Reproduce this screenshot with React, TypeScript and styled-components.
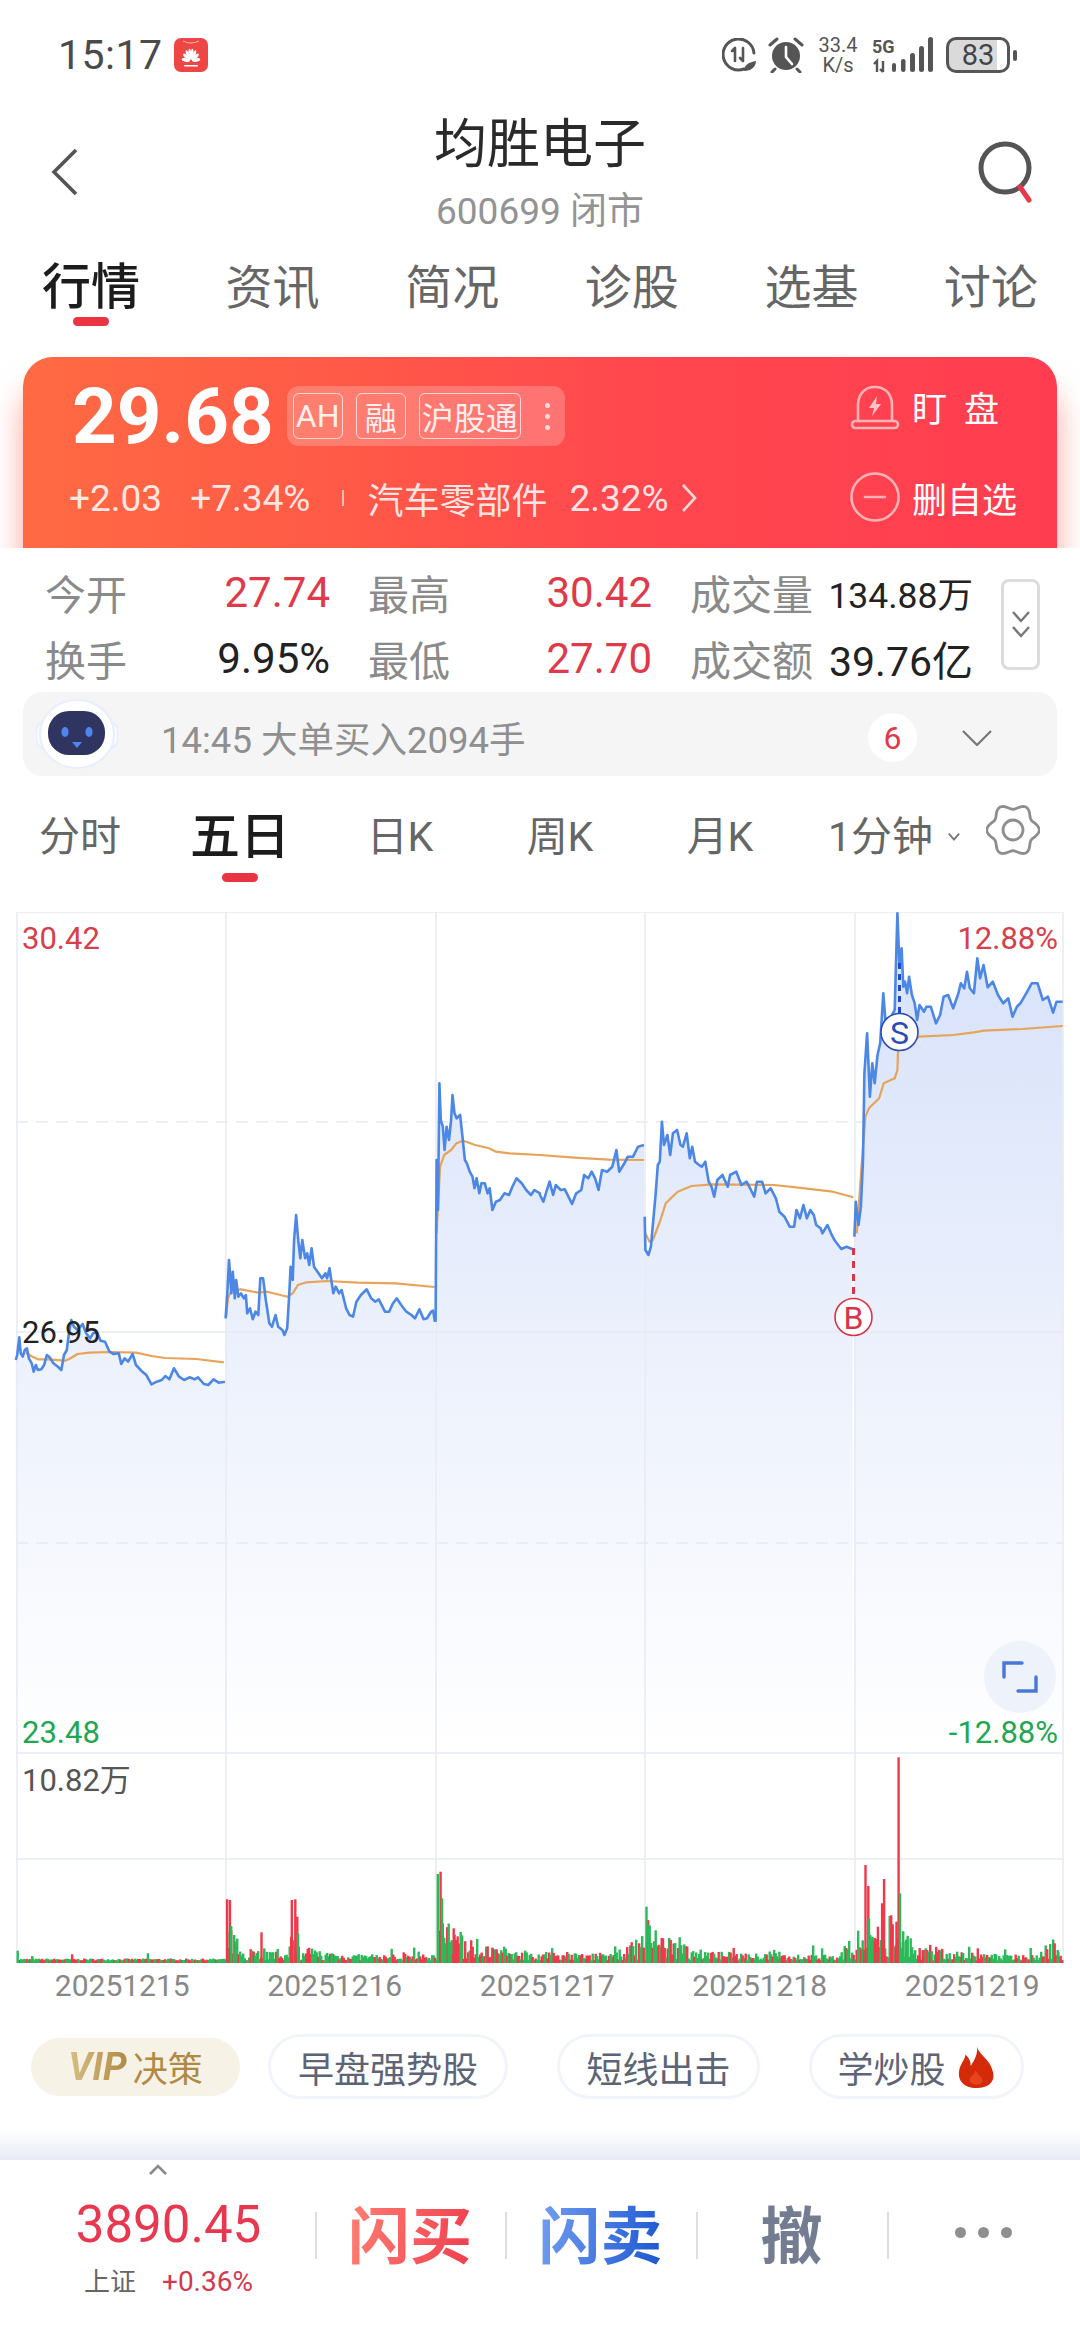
import React from 'react'
import styled, { createGlobalStyle } from 'styled-components'

// zoomed crop coordinates -> page coordinates
const leftCrop = (pts: number[]) => toPairs(pts, 0)
const rightCrop = (pts: number[]) => toPairs(pts, 540)
const toPairs = (pts: number[], dx: number) => {
    const out: number[][] = []
    for (let i = 0; i < pts.length; i += 2) {
        out.push([dx + pts[i] / 2.904, 900 + pts[i + 1] / 3])
    }
    return out
}

const priceDays: number[][][] = [
    leftCrop([46,1380,50,1365,56,1312,60,1360,66,1370,72,1350,78,1345,84,1375,92,1390,98,1415,104,1395,110,1410,120,1408,128,1395,136,1365,144,1372,155,1390,168,1400,178,1410,186,1365,194,1350,200,1300,207,1260,215,1280,225,1290,240,1272,250,1300,262,1315,270,1300,282,1298,292,1322,305,1325,318,1355,330,1362,345,1360,352,1392,362,1375,372,1385,385,1362,395,1395,410,1412,425,1425,440,1453,455,1445,470,1440,480,1428,492,1438,505,1405,520,1430,535,1440,550,1432,565,1438,575,1432,592,1452,605,1455,620,1438,635,1448,653,1445]),
    leftCrop([655,1255,660,1180,665,1080,672,1180,676,1115,682,1195,686,1140,692,1190,700,1180,708,1195,714,1185,718,1240,726,1225,734,1258,742,1235,750,1245,756,1135,764,1135,772,1200,782,1270,790,1280,800,1245,808,1280,820,1290,826,1305,834,1285,840,1180,844,1100,850,1140,854,1020,860,945,866,1020,872,1075,878,1020,886,1075,892,1060,898,1095,905,1045,912,1100,925,1120,935,1135,945,1120,950,1135,957,1105,968,1180,975,1160,985,1180,992,1170,1005,1225,1015,1245,1025,1250,1035,1205,1048,1185,1065,1168,1078,1195,1090,1205,1100,1198,1118,1235,1130,1235,1140,1212,1152,1195,1165,1215,1180,1235,1195,1245,1205,1255,1218,1228,1230,1258,1240,1255,1252,1235,1258,1232,1263,1265]),
    [
        ...leftCrop([1265,1265,1268,780,1272,930,1276,550,1280,660,1286,680,1291,750,1297,680,1304,720,1310,660,1314,585,1320,640,1326,655,1336,645,1342,700,1350,780,1356,790,1364,815,1372,830,1378,865,1384,835,1392,880,1398,850,1408,850,1416,880,1422,865,1430,930,1440,905,1452,900,1465,880,1478,885,1488,860,1500,835,1515,850,1528,870,1542,885,1552,870,1568,880]),
        ...rightCrop([0,885,10,905,20,870,28,845,38,885,46,855,60,870,72,868,85,895,93,912,105,880,120,870,128,825,140,835,150,815,160,835,170,870,180,810,195,815,210,800,222,750,230,815,245,790,255,770,270,770,285,740,302,735]),
    ],
    rightCrop([304,950,306,1050,315,1065,322,1040,330,950,336,880,342,795,348,785,354,665,360,735,370,705,378,765,386,700,398,690,408,735,415,740,426,700,435,775,442,740,450,785,462,795,470,800,480,785,490,845,498,860,506,890,515,840,530,825,545,860,552,825,570,815,585,855,600,845,610,865,622,890,630,845,645,845,655,880,670,865,685,895,695,935,710,950,725,980,738,980,745,930,755,955,765,915,775,955,785,930,795,945,802,975,815,985,820,1000,835,975,845,1000,855,1020,875,1047,890,1040,908,1048]),
    rightCrop([913,1010,917,905,925,975,932,920,938,780,942,520,950,400,958,590,965,490,972,550,980,465,988,430,997,280,1003,360,1020,350,1030,330,1038,40,1044,200,1050,145,1055,260,1060,245,1066,280,1072,230,1080,285,1088,310,1095,360,1102,315,1115,335,1122,320,1135,320,1150,370,1162,345,1172,290,1185,285,1200,325,1215,280,1222,250,1232,265,1240,215,1248,265,1260,280,1270,175,1278,235,1288,195,1300,262,1315,245,1330,285,1345,310,1360,295,1372,350,1385,320,1395,310,1412,280,1428,250,1445,250,1460,300,1475,290,1490,338,1500,305,1518,305]),
]

const averageDays: number[][][] = [
    leftCrop([75,1358,90,1368,110,1378,140,1378,190,1382,205,1375,225,1362,260,1358,320,1356,395,1358,440,1368,480,1374,570,1377,650,1387]),
    leftCrop([657,1250,662,1195,672,1170,700,1168,750,1178,775,1175,835,1190,850,1180,865,1155,890,1147,950,1143,1040,1148,1150,1150,1262,1161]),
    [
        ...leftCrop([1268,1000,1278,800,1290,765,1310,750,1325,730,1345,722,1380,735,1420,745,1440,755,1480,760,1568,765]),
        ...rightCrop([100,773,200,779,302,780]),
    ],
    rightCrop([306,1000,318,1025,328,1020,350,960,365,910,400,875,440,858,500,853,680,855,750,863,850,875,910,892]),
    rightCrop([920,1000,935,780,945,650,955,625,985,595,998,550,1030,535,1038,510,1040,450,1100,410,1200,405,1260,397,1290,392,1400,387,1518,378]),
]

const line = (pts: number[][]) => pts.map((p) => `${p[0].toFixed(1)},${p[1].toFixed(1)}`).join(' ')
const area = (pts: number[][]) => `${pts[0][0].toFixed(1)},1752 ${line(pts)} ${pts[pts.length - 1][0].toFixed(1)},1752`

// volume bars: quiet noise plus the spikes read off the picture
const RED = '#f0384a'
const GREEN = '#2cb95a'
const buildBars = () => {
    let seed = 7
    const rnd = () => {
        seed = (seed * 16807) % 2147483647
        return seed / 2147483647
    }
    const bursts = [[226, 30, 22], [290, 22, 18], [436, 42, 42], [645, 42, 30], [855, 32, 32], [888, 32, 26]]
    const bars: { x: number; h: number; c: string }[] = []
    for (let x = 17; x < 1062; x += 1.5) {
        let env = x < 226 ? 2 : 6
        bursts.forEach(([start, amp, decay]) => {
            if (x >= start) env += amp * Math.exp(-(x - start) / decay)
        })
        if (x > 610 && x < 645) env += (x - 610) * 0.6
        if (x > 825 && x < 855) env += (x - 825) * 0.6
        if (x > 1035) env += (x - 1035) * 0.9
        let h = 2.5 + rnd() * env
        if (x > 226 && rnd() > 0.93) h += 7 * rnd() + 3
        bars.push({ x, h, c: rnd() > 0.45 ? GREEN : RED })
    }
    const spikes: [number, number, string][] = [
        [24,752,GREEN],[45,768,GREEN],[103,763,RED],[213,760,GREEN],[328,598,RED],[332,600,RED],[334,678,GREEN],[340,725,GREEN],[378,697,RED],[382,745,GREEN],
        [422,600,RED],[427,598,RED],[430,650,RED],[431,700,GREEN],[480,760,GREEN],[634,522,GREEN],[638,515,RED],[640,595,GREEN],[645,730,GREEN],[657,685,RED],[660,720,RED],[714,745,RED],
        [937,620,GREEN],[940,675,GREEN],[948,725,GREEN],[961,715,RED],[1130,755,GREEN],[1192,745,GREEN],[1255,495,RED],[1259,558,RED],[1260,655,GREEN],[1265,710,GREEN],
        [1273,680,RED],[1277,720,GREEN],[1279,610,RED],[1282,537,RED],[1300,665,RED],[1303,172,RED],[1305,580,GREEN],[1310,725,GREEN],[1418,745,RED],[1535,755,GREEN],
    ]
    spikes.forEach(([zx, zy, c]) => {
        bars.push({ x: zx / 1.452, h: 1963 - (1700 + zy / 3), c })
    })
    return bars
}
const volumeBars = buildBars()

const gearPath = (() => {
    const pts: string[] = []
    for (let a = 0; a < 360; a += 5) {
        const t = (a * Math.PI) / 180
        const r = 23.5 + 2.8 * Math.cos(6 * t)
        pts.push(`${(27 + r * Math.cos(t)).toFixed(1)},${(27 + r * Math.sin(t)).toFixed(1)}`)
    }
    return pts.join(' ')
})()

const GlobalStyle = createGlobalStyle`
    html, body {
        margin: 0;
        padding: 0;
        background: #fff;
    }
    body {
        font-family: Roboto, "Noto Sans CJK SC", sans-serif;
        color: #222;
    }
`

const App: React.FC = () => {
    return (
        <Page>
            <GlobalStyle />
            <StatusBar>
                <StatusLeft>
                    <Clock>15:17</Clock>
                    <svg width="34" height="34" viewBox="0 0 34 34">
                        <rect width="34" height="34" rx="7" fill="#ee4545" />
                        <path d="M9 3 Q17 7 25 3" stroke="#ffb3ad" strokeWidth="1" fill="none" />
                        <g fill="#fff" transform="translate(17 23) scale(.75 1)">
                            {[-82, -56, -32, -10, 10, 32, 56, 82].map((a) => (
                                <ellipse key={a} cx="0" cy="-7" rx="1.8" ry="5.5" transform={`rotate(${a})`} />
                            ))}
                        </g>
                        <rect x="10" y="27" width="14" height="1.4" rx=".7" fill="#fff" />
                    </svg>
                </StatusLeft>
                <StatusRight>
                    <svg width="34" height="34" viewBox="0 0 34 34" fill="none">
                        <path d="M22 31 A15.5 15.5 0 1 1 32 15" stroke="#555" strokeWidth="3" strokeLinecap="round" />
                        <path d="M10 13 L13 10 V23 M21 10 V23 M18 20 L21 23" stroke="#555" strokeWidth="2.6" strokeLinecap="round" strokeLinejoin="round" />
                        <path d="M22 33 C22 27 27 24 34 23 C34 29 29 33 22 33Z" fill="#555" />
                    </svg>
                    <svg width="36" height="36" viewBox="0 0 36 36" fill="none">
                        <circle cx="18" cy="19" r="14" fill="#555" />
                        <path d="M18 10 V20 L24 27" stroke="#fff" strokeWidth="2.6" strokeLinecap="round" />
                        <path d="M2 8 L9 2 M34 8 L27 2 M7 32 L4 35 M29 32 L32 35" stroke="#555" strokeWidth="3" strokeLinecap="round" />
                    </svg>
                    <Speed>
                        <span>33.4</span>
                        <span>K/s</span>
                    </Speed>
                    <svg width="62" height="36" viewBox="0 0 62 36" fill="#555">
                        <text x="0" y="16" fontSize="18" fontWeight="700" fontFamily="Roboto, sans-serif">5G</text>
                        <path d="M2 27 L5 24 V35 M11 24 V35 M8 32 L11 35" stroke="#555" strokeWidth="2.4" fill="none" />
                        <rect x="20" y="26" width="4" height="9" rx="2" />
                        <rect x="29" y="22" width="4.5" height="13" rx="2.2" />
                        <rect x="38" y="16" width="5" height="19" rx="2.5" />
                        <rect x="47" y="9" width="5" height="26" rx="2.5" />
                        <rect x="56" y="0" width="5" height="35" rx="2.5" />
                    </svg>
                    <Battery>83</Battery>
                </StatusRight>
            </StatusBar>

            <Header>
                <BackIcon width="30" height="48" viewBox="0 0 30 48" fill="none">
                    <path d="M26 2 L4 24 L26 46" stroke="#555" strokeWidth="3.6" />
                </BackIcon>
                <TitleBlock>
                    <Title>均胜电子</Title>
                    <SubTitle>600699 闭市</SubTitle>
                </TitleBlock>
                <SearchIcon width="60" height="62" viewBox="0 0 60 62" fill="none">
                    <circle cx="29" cy="27" r="24" stroke="#555" strokeWidth="5" />
                    <path d="M44 46 L53 59" stroke="#e8384a" strokeWidth="5" strokeLinecap="round" />
                </SearchIcon>
            </Header>

            <TopTabs>
                {['行情', '资讯', '简况', '诊股', '选基', '讨论'].map((t, i) => (
                    <TopTab key={t} $active={i === 0}>
                        {t}
                        <TabBar $show={i === 0} />
                    </TopTab>
                ))}
            </TopTabs>

            <CardClip>
                <QuoteCard>
                    <QuoteLeft>
                        <PriceRow>
                            <Price>29.68</Price>
                            <TagGroup>
                                <Tag>AH</Tag>
                                <Tag>融</Tag>
                                <Tag>沪股通</Tag>
                                <TagDots>
                                    <i />
                                    <i />
                                    <i />
                                </TagDots>
                            </TagGroup>
                        </PriceRow>
                        <ChangeRow>
                            <ChangeItem $ml={0}>+2.03</ChangeItem>
                            <ChangeItem $ml={28}>+7.34%</ChangeItem>
                            <ChangeDivider />
                            <ChangeItem $ml={23} $size={36}>汽车零部件</ChangeItem>
                            <ChangeItem $ml={22}>2.32%</ChangeItem>
                            <ChangeChevron width="18" height="30" viewBox="0 0 18 30" fill="none">
                                <path d="M3 2 L15 15 L3 28" stroke="#ffd9d6" strokeWidth="2.6" />
                            </ChangeChevron>
                        </ChangeRow>
                    </QuoteLeft>
                    <QuoteRight>
                        <QuoteAction>
                            <svg width="50" height="48" viewBox="0 0 50 48" fill="none">
                                <path d="M8 40 V23 C8 12 15 5 25 5 C35 5 42 12 42 23 V40" stroke="#ffb3b6" strokeWidth="2.6" />
                                <rect x="2" y="39" width="46" height="7" rx="3.5" stroke="#ffb3b6" strokeWidth="2.6" />
                                <path d="M27 14 L19 26 H24 L22 34 L31 22 H26 Z" fill="#ffc4c6" />
                            </svg>
                            <ActionText $spaced>盯盘</ActionText>
                        </QuoteAction>
                        <QuoteAction>
                            <svg width="50" height="50" viewBox="0 0 50 50" fill="none">
                                <circle cx="25" cy="25" r="23.5" stroke="#ffb3b6" strokeWidth="2.6" />
                                <path d="M15 25 H35" stroke="#ffb3b6" strokeWidth="2.6" strokeLinecap="round" />
                            </svg>
                            <ActionText>删自选</ActionText>
                        </QuoteAction>
                    </QuoteRight>
                </QuoteCard>
            </CardClip>

            <Stats>
                <StatGrid>
                    <StatCell><StatLabel>今开</StatLabel><StatValue $color="#e0394a">27.74</StatValue></StatCell>
                    <StatCell><StatLabel>最高</StatLabel><StatValue $color="#e0394a">30.42</StatValue></StatCell>
                    <StatCell><StatLabel>成交量</StatLabel><StatValue $size={35.5}>134.88万</StatValue></StatCell>
                    <StatCell><StatLabel>换手</StatLabel><StatValue>9.95%</StatValue></StatCell>
                    <StatCell><StatLabel>最低</StatLabel><StatValue $color="#e0394a">27.70</StatValue></StatCell>
                    <StatCell><StatLabel>成交额</StatLabel><StatValue $size={41}>39.76亿</StatValue></StatCell>
                </StatGrid>
                <ExpandBox>
                    <svg width="20" height="32" viewBox="0 0 20 32" fill="none">
                        <path d="M2 3 L10 12 L18 3 M2 18 L10 27 L18 18" stroke="#777" strokeWidth="2.4" />
                    </svg>
                </ExpandBox>
            </Stats>

            <Notice>
                <RobotIcon width="82" height="72" viewBox="0 0 82 72" fill="none">
                    <rect x="0" y="23" width="82" height="28" rx="10" fill="#f8faff" stroke="#e8effc" strokeWidth="2" />
                    <ellipse cx="41" cy="36" rx="37" ry="34" fill="#fff" stroke="#e8effc" strokeWidth="2" />
                    <rect x="12" y="13" width="57" height="44" rx="21" fill="#2f3460" />
                    <ellipse cx="29" cy="34" rx="3.6" ry="5" fill="#4f86ee" />
                    <ellipse cx="53" cy="34" rx="3.6" ry="5" fill="#4f86ee" />
                    <path d="M36 44 H46 L41 50 Z" fill="#4f86ee" />
                </RobotIcon>
                <NoticeText>14:45 大单买入2094手</NoticeText>
                <NoticeBadge>6</NoticeBadge>
                <svg width="30" height="16" viewBox="0 0 30 16" fill="none">
                    <path d="M1 1 L15 15 L29 1" stroke="#777" strokeWidth="2.2" />
                </svg>
            </Notice>

            <PeriodTabs>
                {['分时', '五日', '日K', '周K', '月K'].map((t, i) => (
                    <PeriodTab key={t} $active={i === 1}>
                        <span>{t}</span>
                        <TabBar $show={i === 1} />
                    </PeriodTab>
                ))}
                <PeriodSelect>
                    1分钟
                    <svg width="14" height="10" viewBox="0 0 14 10" fill="none">
                        <path d="M1 1 L7 8 L13 1" stroke="#777" strokeWidth="2.2" />
                    </svg>
                </PeriodSelect>
                <GearIcon width="54" height="54" viewBox="0 0 54 54" fill="none">
                    <polygon points={gearPath} stroke="#8e8e8e" strokeWidth="2.8" strokeLinejoin="round" />
                    <circle cx="27" cy="27" r="10" stroke="#8e8e8e" strokeWidth="2.8" />
                </GearIcon>
            </PeriodTabs>

            <ChartArea>
                <ChartSvg width="1080" height="1054" viewBox="0 912 1080 1054">
                    <defs>
                        <linearGradient id="priceFill" gradientUnits="userSpaceOnUse" x1="0" y1="912" x2="0" y2="1752">
                            <stop offset="0" stopColor="#d6e1fa" />
                            <stop offset="0.5" stopColor="#ebf0fc" />
                            <stop offset="1" stopColor="#ffffff" />
                        </linearGradient>
                    </defs>
                    {priceDays.map((pts, i) => (
                        <polygon key={i} points={area(pts)} fill="url(#priceFill)" />
                    ))}
                    <g stroke="#e6e9f2" strokeOpacity="0.75" strokeWidth="2" fill="none">
                        <path d="M16 912 H1063 M16 1332 H1063 M16 1753 H1063 M16 1859 H1063" />
                        <path d="M16 1122 H1063 M16 1543 H1063" strokeDasharray="12 8" />
                        <path d="M17 912 V1963 M226 912 V1963 M436 912 V1963 M645 912 V1963 M855 912 V1963 M1063 912 V1963" />
                    </g>
                    {averageDays.map((pts, i) => (
                        <polyline key={i} points={line(pts)} fill="none" stroke="#e8a35a" strokeWidth="2.2" strokeLinejoin="round" />
                    ))}
                    {priceDays.map((pts, i) => (
                        <polyline key={i} points={line(pts)} fill="none" stroke="#4c87e6" strokeWidth="2.6" strokeLinejoin="round" />
                    ))}
                    <path d="M899.5 963 V1013" stroke="#2048d0" strokeWidth="3" strokeDasharray="6 5" />
                    <path d="M853.5 1248 V1298" stroke="#d9344a" strokeWidth="3" strokeDasharray="7 6" />
                    <circle cx="899.5" cy="1032" r="18.5" fill="#fff" stroke="#2a4bb8" strokeWidth="1.6" />
                    <text x="899.5" y="1043.5" textAnchor="middle" fontSize="32" fill="#2a4bb8" fontFamily="Roboto, sans-serif">S</text>
                    <circle cx="853.5" cy="1317" r="18.5" fill="#fff" stroke="#d9344a" strokeWidth="1.6" />
                    <text x="853.5" y="1328.5" textAnchor="middle" fontSize="32" fill="#d9344a" fontFamily="Roboto, sans-serif">B</text>
                    {volumeBars.map((b, i) => (
                        <rect key={i} x={b.x.toFixed(1)} y={(1963 - b.h).toFixed(1)} width="2.4" height={b.h.toFixed(1)} fill={b.c} />
                    ))}
                </ChartSvg>
                <AxisLabel $top={8} $left={22} $color="#d6404b">30.42</AxisLabel>
                <AxisLabel $top={402} $left={22} $color="#222">26.95</AxisLabel>
                <AxisLabel $top={8} $right={22} $color="#d6404b">12.88%</AxisLabel>
                <AxisLabel $top={802} $left={22} $color="#22a652">23.48</AxisLabel>
                <AxisLabel $top={802} $right={22} $color="#22a652">-12.88%</AxisLabel>
                <AxisLabel $top={850} $left={22} $color="#555">10.82万</AxisLabel>
                <FullscreenButton>
                    <svg width="36" height="32" viewBox="0 0 36 32" fill="none">
                        <path d="M2 16 V2 H20 M34 16 V30 H16" stroke="#4a78d8" strokeWidth="3.4" strokeLinecap="round" />
                    </svg>
                </FullscreenButton>
            </ChartArea>

            <DateRow>
                {['20251215', '20251216', '20251217', '20251218', '20251219'].map((d) => (
                    <DateLabel key={d}>{d}</DateLabel>
                ))}
            </DateRow>

            <ChipRow>
                <VipChip>
                    <b>VIP</b>决策
                </VipChip>
                <ChipList>
                    <Chip $width={240}>早盘强势股</Chip>
                    <Chip $width={203}>短线出击</Chip>
                    <Chip $width={215}>
                        学炒股
                        <svg width="40" height="44" viewBox="0 0 38 42">
                            <path d="M20 1 C21 9 32 13 35 25 C38 36 30 41 19 41 C8 41 1 34 3 24 C4 18 8 15 9 9 C12 12 14 15 14 20 C18 14 21 8 20 1Z" fill="#d42a0a" />
                            <path d="M19 24 C20 29 26 30 25 35 C24 39 14 39 13 34 C12 30 17 29 19 24Z" fill="#e8441c" />
                        </svg>
                    </Chip>
                </ChipList>
            </ChipRow>

            <BottomFade />

            <BottomBar>
                <IndexBlock>
                    <svg width="20" height="11" viewBox="0 0 20 11" fill="none">
                        <path d="M2 10 L10 2 L18 10" stroke="#8a8a8a" strokeWidth="2.6" />
                    </svg>
                    <IndexValue>3890.45</IndexValue>
                    <IndexSub>
                        <span>上证</span>
                        <IndexPct>+0.36%</IndexPct>
                    </IndexSub>
                </IndexBlock>
                <ActionCell><FlashText $from="#ff7f72" $to="#ef3d4e">闪买</FlashText></ActionCell>
                <ActionCell><FlashText $from="#74a0f2" $to="#1a55d0">闪卖</FlashText></ActionCell>
                <ActionCell><FlashText $from="#737c90" $to="#737c90">撤</FlashText></ActionCell>
                <ActionCell>
                    <MoreDots>
                        <i />
                        <i />
                        <i />
                    </MoreDots>
                </ActionCell>
            </BottomBar>
        </Page>
    )
}

const Page = styled.div`
    width: 1080px;
    height: 2340px;
    overflow: hidden;
    background: #fff;
`
const StatusBar = styled.div`
    height: 110px;
    box-sizing: border-box;
    padding: 0 63px 0 58px;
    display: flex;
    align-items: center;
    justify-content: space-between;
`
const StatusLeft = styled.div`
    display: flex;
    align-items: center;
    gap: 11px;
`
const Clock = styled.div`
    font-size: 41px;
    color: #4a4a4a;
    letter-spacing: 0.5px;
`
const StatusRight = styled.div`
    display: flex;
    align-items: center;
    gap: 12px;
`
const Speed = styled.div`
    width: 44px;
    display: flex;
    flex-direction: column;
    align-items: center;
    font-size: 20px;
    line-height: 20px;
    color: #555;
`
const Battery = styled.div`
    position: relative;
    width: 64px;
    height: 36px;
    box-sizing: border-box;
    margin-right: 7px;
    border: 3px solid #555;
    border-radius: 10px;
    background: linear-gradient(90deg, #dadada 83%, #fff 83%);
    color: #444;
    font-size: 29px;
    line-height: 30px;
    text-align: center;
    &::after {
        content: '';
        position: absolute;
        right: -10px;
        top: 10px;
        width: 4px;
        height: 11px;
        border-radius: 2px;
        background: #555;
    }
`
const Header = styled.div`
    height: 124px;
    box-sizing: border-box;
    padding: 0 47px;
    display: grid;
    grid-template-columns: 1fr auto 1fr;
    align-items: center;
`
const BackIcon = styled.svg`
    margin-left: 3px;
`
const SearchIcon = styled.svg`
    justify-self: end;
    margin-right: -3px;
`
const TitleBlock = styled.div`
    display: flex;
    flex-direction: column;
    align-items: center;
    gap: 10px;
    white-space: nowrap;
`
const Title = styled.div`
    font-size: 53px;
    line-height: 70px;
    color: #2a2a2a;
`
const SubTitle = styled.div`
    font-size: 37px;
    line-height: 44px;
    color: #939393;
`
const TopTabs = styled.div`
    height: 123px;
    box-sizing: border-box;
    padding: 25px 42px 0;
    display: flex;
    justify-content: space-between;
`
const TopTab = styled.div<{ $active: boolean }>`
    display: flex;
    flex-direction: column;
    align-items: center;
    font-size: ${(p) => (p.$active ? 49 : 47)}px;
    font-weight: ${(p) => (p.$active ? 500 : 400)};
    line-height: 58px;
    color: ${(p) => (p.$active ? '#1c1c1c' : '#666')};
`
const TabBar = styled.div<{ $show: boolean }>`
    width: 36px;
    height: 9px;
    border-radius: 5px;
    background: ${(p) => (p.$show ? '#ea3442' : 'transparent')};
`
const CardClip = styled.div`
    height: 191px;
    padding: 0 23px;
    overflow: hidden;
`
const QuoteCard = styled.div`
    height: 191px;
    box-sizing: border-box;
    display: flex;
    justify-content: space-between;
    border-radius: 30px 30px 0 0;
    background: linear-gradient(90deg, #ff6a43 0%, #ff5a47 30%, #ff474e 60%, #ff3d50 100%);
    box-shadow: 0 30px 30px rgba(255, 90, 70, 0.55);
    color: #fff;
`
const QuoteLeft = styled.div`
    padding: 14px 0 0 46px;
    display: flex;
    flex-direction: column;
    gap: 12px;
`
const PriceRow = styled.div`
    display: flex;
    align-items: center;
    height: 90px;
    padding-left: 3px;
    gap: 13px;
`
const Price = styled.div`
    font-size: 78px;
    font-weight: 700;
    line-height: 90px;
    position: relative;
    top: 1px;
`
const TagGroup = styled.div`
    height: 60px;
    box-sizing: border-box;
    padding: 0 3px 0 6px;
    display: flex;
    align-items: center;
    gap: 13px;
    border-radius: 12px;
    background: rgba(255, 255, 255, 0.22);
`
const Tag = styled.div`
    height: 46px;
    min-width: 50px;
    box-sizing: border-box;
    padding: 0 2px;
    display: flex;
    align-items: center;
    justify-content: center;
    border: 1.5px solid rgba(255, 255, 255, 0.7);
    border-radius: 6px;
    font-size: 32px;
    color: rgba(255, 255, 255, 0.9);
`
const TagDots = styled.div`
    width: 28px;
    display: flex;
    flex-direction: column;
    align-items: center;
    gap: 6px;
    i {
        width: 5px;
        height: 5px;
        border-radius: 50%;
        background: rgba(255, 255, 255, 0.75);
    }
`
const ChangeRow = styled.div`
    height: 50px;
    display: flex;
    align-items: center;
    color: rgba(255, 255, 255, 0.85);
`
const ChangeItem = styled.span<{ $ml: number; $size?: number }>`
    margin-left: ${(p) => p.$ml}px;
    font-size: ${(p) => p.$size || 37}px;
    white-space: nowrap;
`
const ChangeDivider = styled.div`
    width: 2px;
    height: 16px;
    margin-left: 32px;
    background: rgba(255, 255, 255, 0.6);
`
const ChangeChevron = styled.svg`
    margin-left: 11px;
`
const QuoteRight = styled.div`
    padding: 24px 40px 0 0;
    display: flex;
    flex-direction: column;
    gap: 41px;
`
const QuoteAction = styled.div`
    height: 50px;
    display: flex;
    align-items: center;
    gap: 12px;
`
const ActionText = styled.div<{ $spaced?: boolean }>`
    font-size: 35px;
    letter-spacing: ${(p) => (p.$spaced ? 17 : 0)}px;
    color: #fff;
`
const Stats = styled.div`
    height: 144px;
    box-sizing: border-box;
    padding: 11px 0 0 45px;
    display: flex;
`
const StatGrid = styled.div`
    display: grid;
    grid-template-columns: 285px 284px 283px;
    grid-auto-rows: 66px;
    column-gap: 38px;
`
const StatCell = styled.div`
    display: flex;
    align-items: center;
    justify-content: space-between;
`
const StatLabel = styled.div`
    font-size: 41px;
    color: #8a8a8a;
    white-space: nowrap;
`
const StatValue = styled.div<{ $color?: string; $size?: number }>`
    font-size: ${(p) => p.$size || 42}px;
    color: ${(p) => p.$color || '#222'};
    white-space: nowrap;
`
const ExpandBox = styled.div`
    width: 39px;
    height: 91px;
    box-sizing: border-box;
    margin: 20px 0 0 28px;
    display: flex;
    align-items: center;
    justify-content: center;
    border: 3px solid #dcdcdc;
    border-radius: 8px;
`
const Notice = styled.div`
    height: 84px;
    box-sizing: border-box;
    margin: 0 23px;
    padding: 7px 65px 0 13px;
    display: flex;
    align-items: center;
    border-radius: 20px;
    background: #f5f5f5;
`
const RobotIcon = styled.svg`
    margin-top: -7px;
`
const NoticeText = styled.div`
    flex: 1;
    margin-left: 43px;
    font-size: 36.5px;
    color: #8f8f8f;
`
const NoticeBadge = styled.div`
    width: 49px;
    height: 49px;
    margin-right: 45px;
    display: flex;
    align-items: center;
    justify-content: center;
    border-radius: 50%;
    background: #fff;
    color: #e0394a;
    font-size: 32px;
`
const PeriodTabs = styled.div`
    height: 136px;
    box-sizing: border-box;
    padding-top: 31px;
    display: grid;
    grid-template-columns: repeat(6, 160px) 120px;
    align-items: start;
`
const PeriodTab = styled.div<{ $active: boolean }>`
    display: flex;
    flex-direction: column;
    align-items: center;
    gap: 6px;
    font-size: ${(p) => (p.$active ? 50 : 41)}px;
    font-weight: ${(p) => (p.$active ? 500 : 400)};
    line-height: 60px;
    color: ${(p) => (p.$active ? '#1c1c1c' : '#666')};
`
const PeriodSelect = styled.div`
    padding-left: 28px;
    display: flex;
    align-items: center;
    gap: 15px;
    font-size: 41px;
    line-height: 60px;
    color: #666;
    white-space: nowrap;
`
const GearIcon = styled.svg`
    margin: -4px 0 0 26px;
`
const ChartArea = styled.div`
    position: relative;
    height: 1054px;
`
const ChartSvg = styled.svg`
    display: block;
`
const AxisLabel = styled.div<{ $top: number; $left?: number; $right?: number; $color: string }>`
    position: absolute;
    top: ${(p) => p.$top}px;
    ${(p) => (p.$left !== undefined ? `left: ${p.$left}px;` : '')}
    ${(p) => (p.$right !== undefined ? `right: ${p.$right}px;` : '')}
    font-size: 31px;
    line-height: 38px;
    color: ${(p) => p.$color};
`
const FullscreenButton = styled.div`
    position: absolute;
    left: 984px;
    top: 729px;
    width: 72px;
    height: 72px;
    display: flex;
    align-items: center;
    justify-content: center;
    border-radius: 50%;
    background: #eef2fb;
`
const DateRow = styled.div`
    height: 68px;
    padding-left: 16px;
    display: grid;
    grid-template-columns: repeat(5, 212.5px);
    align-items: start;
`
const DateLabel = styled.div`
    text-align: center;
    font-size: 30px;
    line-height: 40px;
    color: #888;
`
const ChipRow = styled.div`
    height: 65px;
    padding-left: 31px;
    display: flex;
    align-items: center;
    gap: 28px;
`
const VipChip = styled.div`
    width: 209px;
    height: 58px;
    display: flex;
    align-items: center;
    justify-content: center;
    gap: 6px;
    border-radius: 29px;
    background: #f7f2e6;
    font-size: 35px;
    color: #b08a45;
    b {
        font-size: 38px;
        font-style: italic;
        font-weight: 700;
        background: linear-gradient(90deg, #d8bf85, #b08a45);
        -webkit-background-clip: text;
        background-clip: text;
        color: transparent;
    }
`
const ChipList = styled.div`
    display: flex;
    gap: 49px;
`
const Chip = styled.div<{ $width: number }>`
    width: ${(p) => p.$width}px;
    height: 65px;
    box-sizing: border-box;
    display: flex;
    align-items: center;
    justify-content: center;
    gap: 10px;
    border: 3px solid #f1f4fa;
    border-radius: 33px;
    font-size: 36px;
    color: #5c6476;
`
const BottomFade = styled.div`
    height: 30px;
    margin-top: 31px;
    background: linear-gradient(180deg, #ffffff, #e7ebf4);
`
const BottomBar = styled.div`
    height: 180px;
    display: grid;
    grid-template-columns: 315px 190px 191px 191px 193px;
    align-items: start;
`
const IndexBlock = styled.div`
    padding: 4px 0 0 22px;
    display: flex;
    flex-direction: column;
    align-items: center;
    svg {
        margin-left: -22px;
    }
`
const IndexValue = styled.div`
    margin-top: 20px;
    font-size: 51px;
    line-height: 60px;
    color: #e8384f;
`
const IndexSub = styled.div`
    margin-top: 7px;
    display: flex;
    align-items: center;
    gap: 26px;
    font-size: 26px;
    line-height: 40px;
    color: #666;
`
const IndexPct = styled.span`
    font-size: 28px;
    color: #d23a50;
`
const ActionCell = styled.div`
    position: relative;
    height: 90px;
    margin-top: 30px;
    display: flex;
    align-items: center;
    justify-content: center;
    &::before {
        content: '';
        position: absolute;
        left: 0;
        top: 22px;
        width: 2px;
        height: 47px;
        background: #dedede;
    }
`
const FlashText = styled.div<{ $from: string; $to: string }>`
    position: relative;
    top: 3px;
    font-size: 62px;
    font-weight: 700;
    line-height: 72px;
    background: linear-gradient(100deg, ${(p) => p.$from}, ${(p) => p.$to});
    -webkit-background-clip: text;
    background-clip: text;
    color: transparent;
`
const MoreDots = styled.div`
    margin-top: -6px;
    display: flex;
    gap: 12px;
    i {
        width: 11px;
        height: 11px;
        border-radius: 50%;
        background: #8f8f8f;
    }
`

export default App
